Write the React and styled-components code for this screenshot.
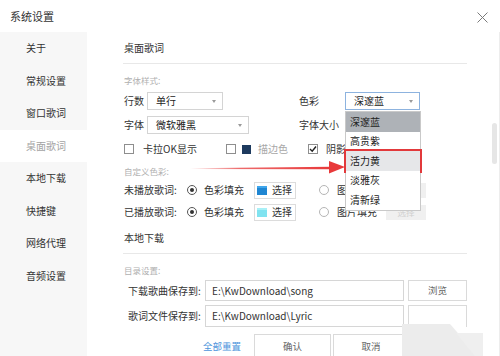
import React from 'react';
import styled, { createGlobalStyle } from 'styled-components';

const Global = createGlobalStyle`
  html, body { margin: 0; padding: 0; background: #fff; }
  body { font-family: "Noto Sans CJK SC", "Noto Sans", sans-serif; color: #333; }
  *, *::before, *::after { box-sizing: border-box; }
`;

const Window = styled.div`
  position: relative;
  width: 500px;
  height: 356px;
  overflow: hidden;
  background: #fff;
  font-size: 10px;
  line-height: 1;
`;

const TitleBar = styled.header`
  height: 32px;
  display: flex;
  align-items: center;
  justify-content: space-between;
  padding: 0 12px 0 10px;
  font-size: 11px;
  color: #333;
`;

const CloseIcon = styled.svg`
  width: 11px;
  height: 11px;
  margin-top: 2px;
`;

const Body = styled.div`
  display: flex;
  height: 324px;
`;

const Sidebar = styled.nav`
  width: 87px;
  flex: none;
  background: #f7f7f7;
  display: flex;
  flex-direction: column;
`;

const NavItem = styled.div`
  height: 32.5px;
  flex: none;
  display: flex;
  align-items: center;
  padding-left: 26px;
  color: ${p => (p.$active ? '#a3a3a3' : '#333')};
  background: ${p => (p.$active ? '#fff' : 'transparent')};
`;

const Main = styled.main`
  flex: 1;
  padding: 0 42px 0 36px;
  display: flex;
  flex-direction: column;
`;

const SectionTitle = styled.div`
  height: 32px;
  flex: none;
  display: flex;
  align-items: center;
  padding-left: 1px;
  border-bottom: 1px solid #e8e8e8;
  color: #333;
`;

const SubLabel = styled.div`
  margin-top: ${p => p.$mt}px;
  height: 14px;
  line-height: 14px;
  padding-left: 1px;
  font-size: 8.5px;
  color: #b0b0b0;
  flex: none;
`;

const Row = styled.div`
  display: flex;
  align-items: center;
  height: ${p => p.$h}px;
  margin-top: ${p => p.$mt}px;
  flex: none;
`;

const Cell = styled.div`
  width: ${p => (p.$w ? `${p.$w}px` : 'auto')};
  flex: none;
  display: flex;
  align-items: center;
  height: 100%;
  gap: ${p => p.$gap || 0}px;
  padding-left: ${p => p.$pl || 0}px;
  position: relative;
`;

const Label = styled.span`
  width: ${p => (p.$w ? `${p.$w}px` : 'auto')};
  flex: none;
  padding-left: 1px;
  color: ${p => p.$muted ? '#a8a8a8' : '#333'};
  white-space: nowrap;
`;

const SelectBox = styled.div`
  position: relative;
  width: ${p => p.$w}px;
  height: 18px;
  flex: none;
  display: flex;
  align-items: center;
  padding-left: 8px;
  border: 1px solid ${p => (p.$focus ? '#8db3df' : '#d4d4d4')};
  background: #fff;
  color: #222;
  &::after {
    content: '';
    position: absolute;
    right: 6px;
    top: 7px;
    border-left: 2.5px solid transparent;
    border-right: 2.5px solid transparent;
    border-top: 3px solid #9a9a9a;
  }
`;

const DropList = styled.ul`
  position: absolute;
  left: -1px;
  top: 18px;
  width: 76px;
  margin: 0;
  padding: 0;
  list-style: none;
  background: #fff;
  border: 1px solid #c9c9c9;
  z-index: 5;
`;

const DropItem = styled.li`
  height: 19.5px;
  display: flex;
  align-items: center;
  padding-left: 4px;
  color: #222;
  background: ${p => (p.$selected ? '#aeb2b7' : p.$hot ? '#e6e7e9' : '#fff')};
  outline: ${p => (p.$hot ? '2px solid #e2393b' : 'none')};
  position: relative;
`;

const Check = styled.span`
  width: 10px;
  height: 10px;
  flex: none;
  border: 1px solid #8e8e8e;
  background: #fff;
  display: flex;
  align-items: center;
  justify-content: center;
`;

const ColorSquare = styled.span`
  width: 9px;
  height: 9px;
  flex: none;
  background: ${p => p.$c};
`;

const Radio = styled.span`
  width: 10px;
  height: 10px;
  flex: none;
  border-radius: 50%;
  border: 1px solid ${p => (p.$on ? '#555' : '#b5b5b5')};
  background: #fff;
  display: flex;
  align-items: center;
  justify-content: center;
  &::after {
    content: '';
    width: 4px;
    height: 4px;
    border-radius: 50%;
    background: ${p => (p.$on ? '#333' : 'transparent')};
  }
`;

const SwatchButton = styled.div`
  width: 42px;
  height: 17px;
  flex: none;
  margin-left: ${p => p.$ml}px;
  display: flex;
  align-items: center;
  gap: 5px;
  padding-left: 2px;
  border: 1px solid #dcdcdc;
  background: #fff;
  color: #333;
`;

const Swatch = styled.span`
  width: 10px;
  height: 9px;
  flex: none;
  background: ${p => p.$c};
  border-top: 2px solid ${p => p.$top};
`;

const DisabledButton = styled.div`
  width: 40px;
  height: 15px;
  flex: none;
  margin-left: 2px;
  display: flex;
  align-items: center;
  justify-content: center;
  background: #f0f0f0;
  color: #cfcfcf;
  font-size: 8.5px;
`;

const PathInput = styled.div`
  width: 199px;
  height: 100%;
  flex: none;
  display: flex;
  align-items: center;
  padding-left: 6px;
  border: 1px solid #d6d6d6;
  color: #333;
  font-size: 10px;
`;

const Button = styled.div`
  width: ${p => p.$w}px;
  height: 100%;
  flex: none;
  margin-left: ${p => p.$ml || 0}px;
  display: flex;
  align-items: center;
  justify-content: center;
  border: 1px solid #dadada;
  border-bottom: ${p => (p.$open ? 'none' : '1px solid #dadada')};
  background: #fff;
  color: #666;
  font-size: 9.5px;
`;

const Link = styled.span`
  margin-left: 80px;
  color: #4d95dc;
  font-size: 9.5px;
  white-space: nowrap;
`;

const ScrollThumb = styled.div`
  position: absolute;
  left: 492px;
  top: 123px;
  width: 5px;
  height: 41px;
  border-radius: 3px;
  background: #e6e6e6;
`;

const Edge = styled.div`
  position: absolute;
  right: 0;
  top: 32px;
  bottom: 0;
  width: 1px;
  background: #ededed;
`;

const ArrowMark = styled.svg`
  position: absolute;
  left: 188px;
  top: 158px;
  width: 160px;
  height: 18px;
  z-index: 6;
`;

const Watermark = styled.svg`
  position: absolute;
  left: 400px;
  top: 322px;
  width: 100px;
  height: 34px;
  z-index: 6;
`;

const navItems = ['关于', '常规设置', '窗口歌词', '桌面歌词', '本地下载', '快捷键', '网络代理', '音频设置'];
const colors = ['深邃蓝', '高贵紫', '活力黄', '淡雅灰', '清新绿'];

export default function App() {
  return (
    <>
      <Global />
      <Window>
        <TitleBar>
          <span>系统设置</span>
          <CloseIcon viewBox="0 0 11 11">
            <path d="M0.5 0.5 L10.5 10.5 M10.5 0.5 L0.5 10.5" stroke="#7a7a7a" strokeWidth="1" fill="none" />
          </CloseIcon>
        </TitleBar>
        <Body>
          <Sidebar>
            {navItems.map(n => (
              <NavItem key={n} $active={n === '桌面歌词'}>{n}</NavItem>
            ))}
          </Sidebar>
          <Main>
            <SectionTitle>桌面歌词</SectionTitle>
            <SubLabel $mt={9}>字体样式:</SubLabel>
            <Row $h={18} $mt={5}>
              <Cell $w={175}>
                <Label $w={24}>行数</Label>
                <SelectBox $w={76}>单行</SelectBox>
              </Cell>
              <Cell>
                <Label $w={47}>色彩</Label>
                <SelectBox $w={75} $focus>
                  深邃蓝
                  <DropList>
                    {colors.map(c => (
                      <DropItem key={c} $selected={c === '深邃蓝'} $hot={c === '活力黄'}>{c}</DropItem>
                    ))}
                  </DropList>
                </SelectBox>
              </Cell>
            </Row>
            <Row $h={18} $mt={6}>
              <Cell $w={175}>
                <Label $w={24}>字体</Label>
                <SelectBox $w={102}>微软雅黑</SelectBox>
              </Cell>
              <Cell>
                <Label>字体大小</Label>
              </Cell>
            </Row>
            <Row $h={20} $mt={5}>
              <Cell $w={103} $gap={8} $pl={1}>
                <Check />
                <Label>卡拉OK显示</Label>
              </Cell>
              <Cell $w={82} $gap={6}>
                <Check />
                <ColorSquare $c="#1d3a5e" />
                <Label $muted>描边色</Label>
              </Cell>
              <Cell $gap={7}>
                <Check>
                  <svg width="8" height="8" viewBox="0 0 8 8">
                    <path d="M1 4 L3.2 6.2 L7 1.5" stroke="#222" strokeWidth="1.4" fill="none" />
                  </svg>
                </Check>
                <Label>阴影</Label>
              </Cell>
            </Row>
            <SubLabel $mt={5}>自定义色彩:</SubLabel>
            <Row $h={20} $mt={2}>
              <Cell $w={64}><Label>未播放歌词:</Label></Cell>
              <Cell $w={132} $gap={6}>
                <Radio $on />
                <Label>色彩填充</Label>
                <SwatchButton $ml={4}>
                  <Swatch $c="#1f86d2" $top="#3fa6ec" />
                  选择
                </SwatchButton>
              </Cell>
              <Cell $gap={7}>
                <Radio />
                <Label>图片填充</Label>
                <DisabledButton>选择</DisabledButton>
              </Cell>
            </Row>
            <Row $h={20} $mt={2}>
              <Cell $w={64}><Label>已播放歌词:</Label></Cell>
              <Cell $w={132} $gap={6}>
                <Radio $on />
                <Label>色彩填充</Label>
                <SwatchButton $ml={4}>
                  <Swatch $c="#80e3f0" $top="#a8f0f7" />
                  选择
                </SwatchButton>
              </Cell>
              <Cell $gap={7}>
                <Radio />
                <Label>图片填充</Label>
                <DisabledButton>选择</DisabledButton>
              </Cell>
            </Row>
            <SectionTitle>本地下载</SectionTitle>
            <SubLabel $mt={9}>目录设置:</SubLabel>
            <Row $h={21} $mt={3}>
              <Cell $w={82} $pl={4}><Label>下载歌曲保存到:</Label></Cell>
              <PathInput>E:\KwDownload\song</PathInput>
              <Button $w={59} $ml={4}>浏览</Button>
            </Row>
            <Row $h={22} $mt={4}>
              <Cell $w={82} $pl={4}><Label>歌词文件保存到:</Label></Cell>
              <PathInput>E:\KwDownload\Lyric</PathInput>
              <Button $w={59} $ml={4} $open />
            </Row>
            <Row $h={26} $mt={7}>
              <Link>全部重置</Link>
              <Button $w={77} $ml={13}>确认</Button>
              <Button $w={76} $ml={2}>取消</Button>
            </Row>
          </Main>
        </Body>
        <Edge />
        <ScrollThumb />
        <ArrowMark viewBox="0 0 160 18">
          <defs>
            <linearGradient id="redfade" x1="0" y1="0" x2="1" y2="0">
              <stop offset="0" stopColor="#e8393a" stopOpacity="0" />
              <stop offset="0.35" stopColor="#e8393a" stopOpacity="0.75" />
              <stop offset="1" stopColor="#e8393a" stopOpacity="1" />
            </linearGradient>
          </defs>
          <path d="M2 10.2 L144 8.8 L144 11.2 L2 11 Z" fill="url(#redfade)" />
          <polygon points="141,3 157,9 141,15.5" fill="#e8393a" />
        </ArrowMark>
        <Watermark viewBox="0 0 100 34">
          <polygon points="2,2 50,2 78,34 2,34" fill="#ececec" />
          <polygon points="56,11 83,11 83,34 75,34" fill="#efefef" />
        </Watermark>
      </Window>
    </>
  );
}
